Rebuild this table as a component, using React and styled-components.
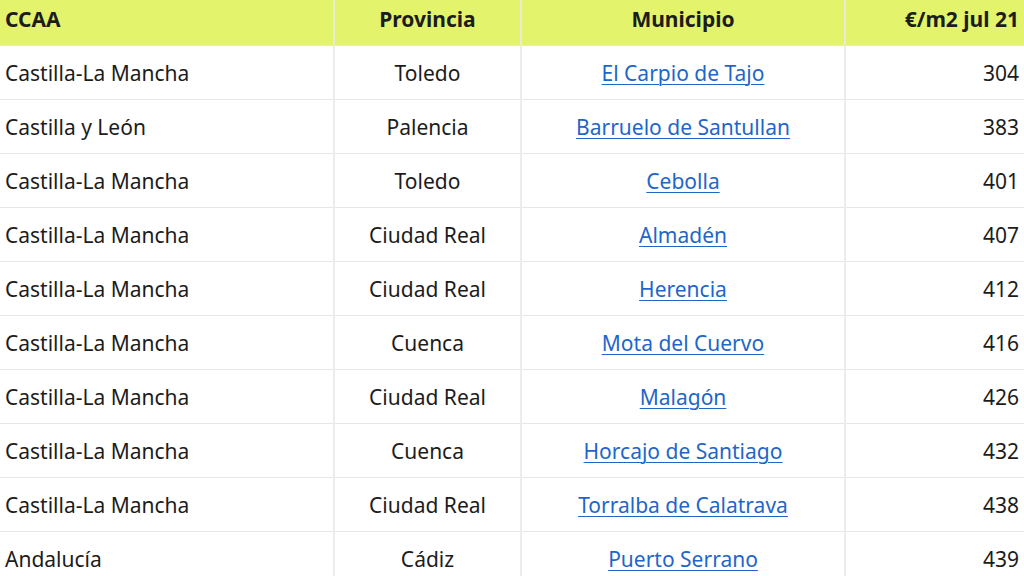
import React from 'react';
import styled, { createGlobalStyle } from 'styled-components';

const GlobalStyle = createGlobalStyle`
    body {
        margin: 0;
        background: #ffffff;
        font-family: "Noto Sans", "Open Sans", sans-serif;
        overflow: hidden;
    }
`

const Table = styled.table`
    width: 1024px;
    border-collapse: collapse;
    table-layout: fixed;
    color: #1c1c1c;
    font-size: 21px;
`

const HeadCell = styled.th`
    background: #e3f36c;
    height: 28px;
    padding: 5px 5px 12px;
    font-weight: 700;
    font-size: 21px;
    text-align: ${p => p.align || 'center'};
    border-left: 2px solid #e8ecd0;
    border-bottom: 1px solid #e6e6e6;
    &:first-child { border-left: none; }
`

const Cell = styled.td`
    height: 53px;
    padding: 0 5px;
    text-align: ${p => p.align || 'center'};
    border-left: 2px solid #ececec;
    border-bottom: 1px solid #e6e6e6;
    white-space: nowrap;
    &:first-child { border-left: none; }
`

const Link = styled.a`
    color: #1f66c9;
    text-decoration: underline;
    text-underline-offset: 3px;
    text-decoration-thickness: 1px;
`

const rows = [
    ['Castilla-La Mancha', 'Toledo', 'El Carpio de Tajo', 304],
    ['Castilla y León', 'Palencia', 'Barruelo de Santullan', 383],
    ['Castilla-La Mancha', 'Toledo', 'Cebolla', 401],
    ['Castilla-La Mancha', 'Ciudad Real', 'Almadén', 407],
    ['Castilla-La Mancha', 'Ciudad Real', 'Herencia', 412],
    ['Castilla-La Mancha', 'Cuenca', 'Mota del Cuervo', 416],
    ['Castilla-La Mancha', 'Ciudad Real', 'Malagón', 426],
    ['Castilla-La Mancha', 'Cuenca', 'Horcajo de Santiago', 432],
    ['Castilla-La Mancha', 'Ciudad Real', 'Torralba de Calatrava', 438],
    ['Andalucía', 'Cádiz', 'Puerto Serrano', 439],
]

export default function App() {
    return (
        <>
            <GlobalStyle />
            <Table>
                <colgroup>
                    <col style={{ width: 334 }} />
                    <col style={{ width: 187 }} />
                    <col style={{ width: 324 }} />
                    <col style={{ width: 179 }} />
                </colgroup>
                <thead>
                    <tr>
                        <HeadCell align="left">CCAA</HeadCell>
                        <HeadCell>Provincia</HeadCell>
                        <HeadCell>Municipio</HeadCell>
                        <HeadCell align="right">€/m2 jul 21</HeadCell>
                    </tr>
                </thead>
                <tbody>
                    {rows.map((r, i) => (
                        <tr key={i}>
                            <Cell align="left">{r[0]}</Cell>
                            <Cell>{r[1]}</Cell>
                            <Cell><Link href="#">{r[2]}</Link></Cell>
                            <Cell align="right">{r[3]}</Cell>
                        </tr>
                    ))}
                </tbody>
            </Table>
        </>
    )
}
